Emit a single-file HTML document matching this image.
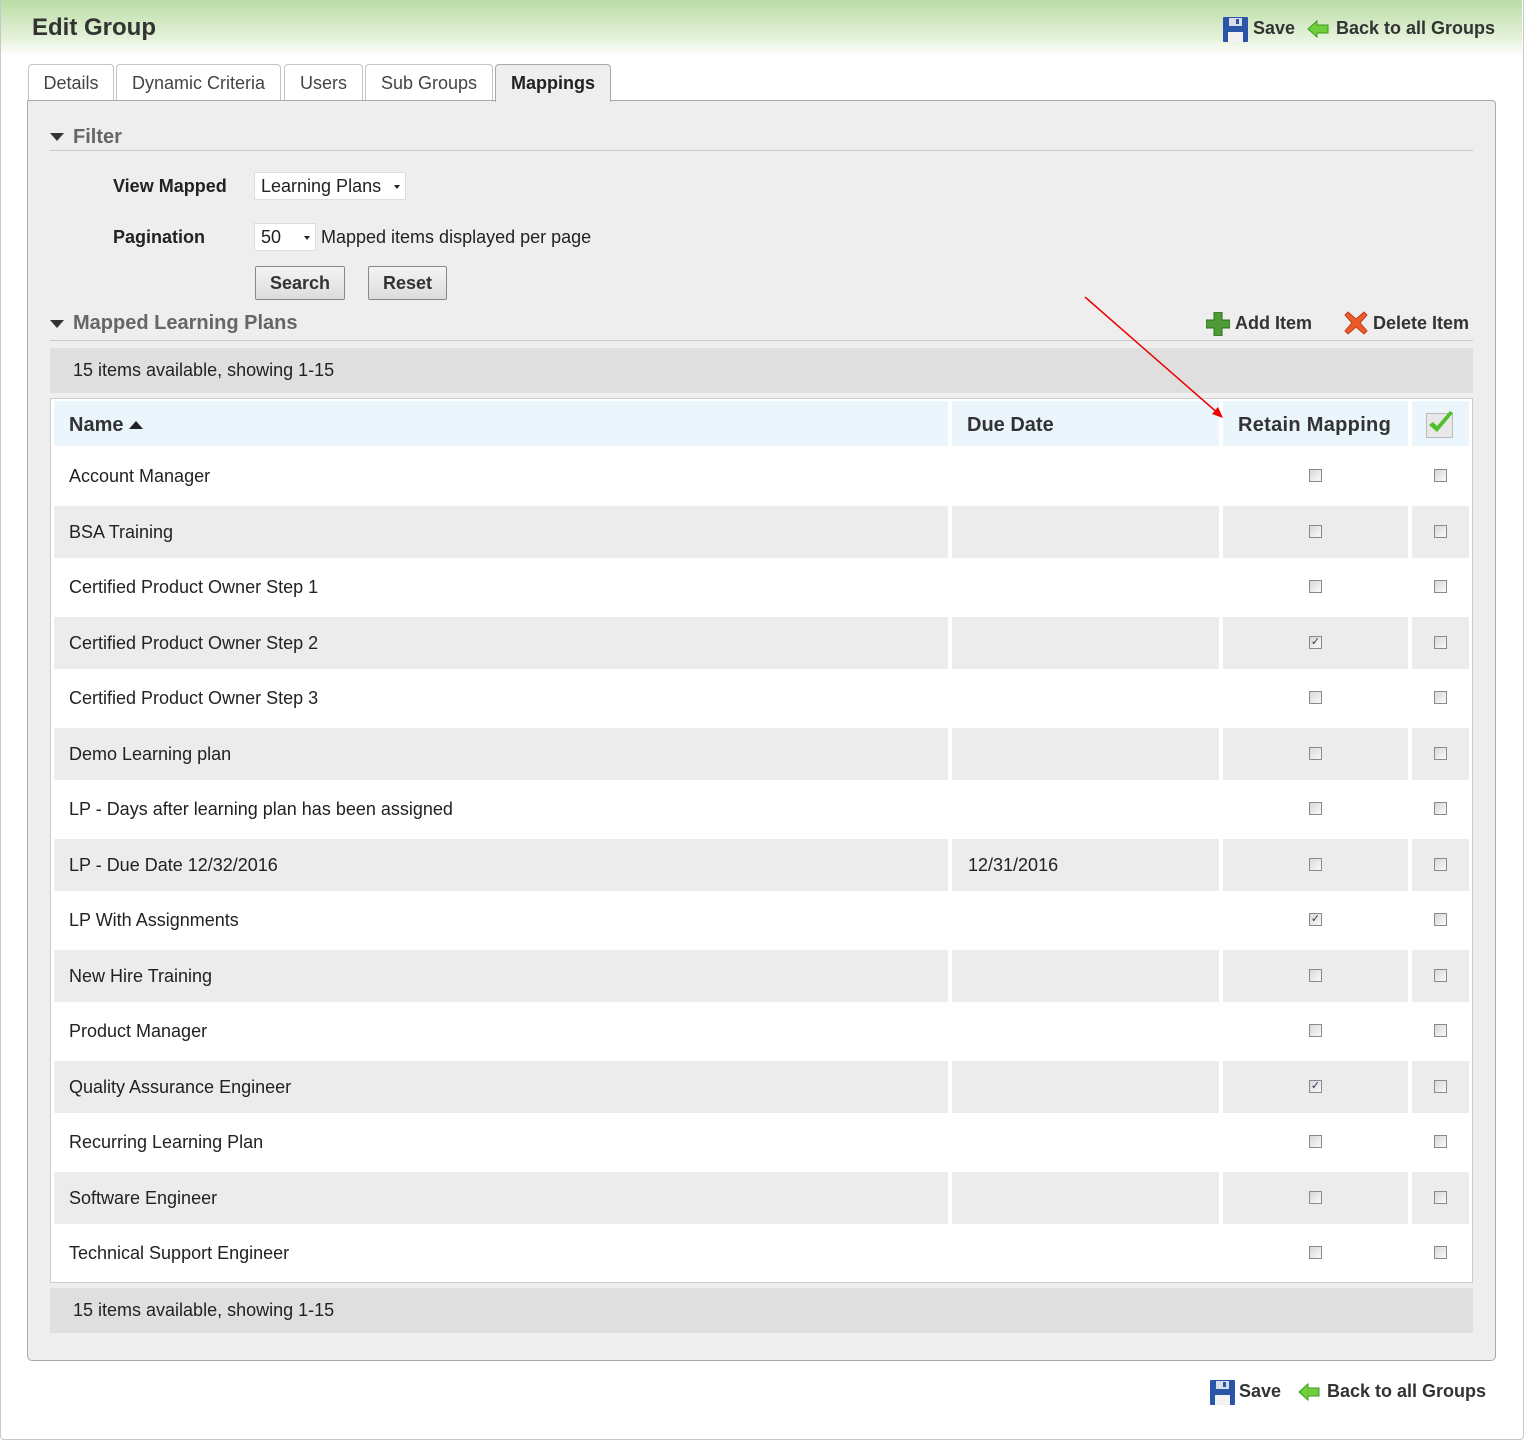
<!DOCTYPE html>
<html><head><meta charset="utf-8"><style>
*{box-sizing:border-box;margin:0;padding:0}
body{width:1524px;height:1440px;background:#fff;font-family:"Liberation Sans",Arial,sans-serif;color:#222;position:relative;overflow:hidden}
.abs{position:absolute}
.frame{position:absolute;left:0;top:0;width:1524px;height:1440px;border:1px solid #c8c8c8;border-top:none;border-radius:0 0 4px 4px}
.hdr{position:absolute;left:1px;top:0;width:1521px;height:56px;background:linear-gradient(#b9dca4,#e3f1d8 65%,#fff)}
h1{position:absolute;left:32px;top:14px;font-size:24px;font-weight:bold;color:#333}
.lnk{font-weight:bold;font-size:18px;color:#333}
.tab{position:absolute;top:64px;height:37px;border:1px solid #c4c4c4;border-bottom:none;border-radius:4px 4px 0 0;background:#fff;font-size:18px;color:#444;text-align:center;line-height:36px}
.panel{position:absolute;left:27px;top:100px;width:1469px;height:1261px;background:#eee;border:1px solid #aaa;border-radius:0 4px 5px 5px}
.sec{position:absolute;font-size:20px;font-weight:bold;color:#666}
.tri{position:absolute;width:0;height:0;border-left:7px solid transparent;border-right:7px solid transparent;border-top:8px solid #333}
.hr{position:absolute;height:1px;background:#ccc}
.lbl{position:absolute;font-size:18px;font-weight:bold;color:#222}
.sel{position:absolute;background:#fff;border:1px solid #ddd;font-size:18px;padding-left:6px;line-height:26px;height:28px}
.sel:after{content:"";position:absolute;right:5px;top:12px;border-left:3.5px solid transparent;border-right:3.5px solid transparent;border-top:4px solid #222}
.btn{position:absolute;top:266px;height:34px;border:1px solid #888;border-radius:2px;background:linear-gradient(#f4f4f4,#dcdcdc);font-size:18px;font-weight:bold;color:#333;text-align:center;line-height:32px}
.bar{position:absolute;left:50px;width:1423px;height:45px;background:#dfdfdf;font-size:18px;line-height:45px;padding-left:23px}
.tbl{position:absolute;left:50px;top:398px;width:1423px;height:885px;background:#fff;border:1px solid #ccc}
.th{position:absolute;top:401px;height:45px;background:#eaf5fc;font-size:20px;font-weight:bold;color:#333;line-height:48px}
.row{position:absolute;left:54px;width:1415px;height:55px}
.row .t{position:absolute;left:15px;top:19px;font-size:18px;color:#222}
.g{position:absolute;top:3px;height:52px;background:#ececec}
.cb{position:absolute;top:22px;width:13px;height:13px;border:1px solid #8a8a8a;background:linear-gradient(135deg,#d8d8d8,#fafafa);font-size:11px;line-height:10px;color:#335;text-align:center}
</style></head><body>
<div class="hdr"></div>
<div class="frame"></div>
<h1>Edit Group</h1>

<svg class="abs" style="left:1223px;top:17px" width="25" height="25" viewBox="0 0 25 25"><rect x="0" y="0" width="25" height="25" rx="1" fill="#2b55a8"/><rect x="6" y="1" width="13" height="8" fill="#d8dde8"/><rect x="13" y="2" width="3" height="5" fill="#2b55a8"/><rect x="5" y="15" width="15" height="10" fill="#f2f2f2"/></svg>
<span class="abs lnk" style="left:1253px;top:18px">Save</span>
<svg class="abs" style="left:1307px;top:19px" width="22" height="20" viewBox="0 0 22 20"><path d="M1 10 L10 2 L10 6 L21 6 L21 14 L10 14 L10 18 Z" fill="#6fcf3a" stroke="#3c9a1e" stroke-width="1"/></svg>
<span class="abs lnk" style="left:1336px;top:18px">Back to all Groups</span>

<div class="tab" style="left:28px;width:86px">Details</div>
<div class="tab" style="left:116px;width:165px">Dynamic Criteria</div>
<div class="tab" style="left:284px;width:79px">Users</div>
<div class="tab" style="left:365px;width:128px">Sub Groups</div>
<div class="panel"></div>
<div class="tab" style="left:495px;width:116px;height:38px;background:#eee;color:#222;font-weight:bold;border-color:#aaa">Mappings</div>

<div class="tri" style="left:50px;top:133px"></div>
<div class="sec" style="left:73px;top:126px">Filter</div>
<div class="hr" style="left:50px;top:150px;width:1423px"></div>
<div class="lbl" style="left:113px;top:176px">View Mapped</div>
<div class="sel" style="left:254px;top:172px;width:152px">Learning Plans</div>
<div class="lbl" style="left:113px;top:227px">Pagination</div>
<div class="sel" style="left:254px;top:223px;width:62px">50</div>
<span class="abs" style="left:321px;top:227px;font-size:18px">Mapped items displayed per page</span>
<div class="btn" style="left:255px;width:90px">Search</div>
<div class="btn" style="left:368px;width:79px">Reset</div>

<div class="tri" style="left:50px;top:320px"></div>
<div class="sec" style="left:73px;top:312px">Mapped Learning Plans</div>
<div class="hr" style="left:50px;top:340px;width:1423px"></div>
<svg class="abs" style="left:1206px;top:312px" width="24" height="24" viewBox="0 0 24 24"><path d="M8 0h8v8h8v8h-8v8h-8v-8h-8v-8h8z" fill="#4f9a35" stroke="#2f6d1e"/></svg>
<span class="abs lnk" style="left:1235px;top:313px">Add Item</span>
<svg class="abs" style="left:1344px;top:311px" width="24" height="24" viewBox="0 0 24 24"><path d="M4 1L12 8L20 1L23 4L16 12L23 20L20 23L12 16L4 23L1 20L8 12L1 4Z" fill="#ee5a2a" stroke="#c43a1a"/></svg>
<span class="abs lnk" style="left:1373px;top:313px">Delete Item</span>

<div class="bar" style="top:348px">15 items available, showing 1-15</div>
<div class="tbl"></div>
<div class="th" style="left:54px;width:894px;padding-left:15px">Name <span style="display:inline-block;width:0;height:0;border-left:7px solid transparent;border-right:7px solid transparent;border-bottom:8px solid #222;vertical-align:2px"></span></div>
<div class="th" style="left:952px;width:267px;padding-left:15px">Due Date</div>
<div class="th" style="left:1223px;width:185px;padding-left:15px;letter-spacing:0.3px">Retain Mapping</div>
<div class="th" style="left:1412px;width:57px"></div>
<svg class="abs" style="left:1426px;top:411px" width="28" height="27" viewBox="0 0 28 27"><rect x="0.5" y="2.5" width="26" height="24" fill="#e8e8e8" stroke="#bbb"/><path d="M3 14L11 21L27 2L24 0L11 15L7 11Z" fill="#4fbf2a"/></svg>
<svg class="abs" style="left:1080px;top:290px" width="150" height="130"><line x1="5" y1="7" x2="140" y2="125" stroke="#e00" stroke-width="1.5"/><path d="M143 128L132 124L138 117Z" fill="#e00"/></svg>

<div class="row" style="top:447px"><div class="t">Account Manager</div><div class="cb" style="left:1255px"></div><div class="cb" style="left:1380px"></div></div>
<div class="row" style="top:502.5px"><div class="g" style="left:0;width:894px"></div><div class="g" style="left:898px;width:267px"></div><div class="g" style="left:1169px;width:185px"></div><div class="g" style="left:1358px;width:57px"></div><div class="t">BSA Training</div><div class="cb" style="left:1255px"></div><div class="cb" style="left:1380px"></div></div>
<div class="row" style="top:558px"><div class="t">Certified Product Owner Step 1</div><div class="cb" style="left:1255px"></div><div class="cb" style="left:1380px"></div></div>
<div class="row" style="top:613.5px"><div class="g" style="left:0;width:894px"></div><div class="g" style="left:898px;width:267px"></div><div class="g" style="left:1169px;width:185px"></div><div class="g" style="left:1358px;width:57px"></div><div class="t">Certified Product Owner Step 2</div><div class="cb" style="left:1255px">✓</div><div class="cb" style="left:1380px"></div></div>
<div class="row" style="top:669px"><div class="t">Certified Product Owner Step 3</div><div class="cb" style="left:1255px"></div><div class="cb" style="left:1380px"></div></div>
<div class="row" style="top:724.5px"><div class="g" style="left:0;width:894px"></div><div class="g" style="left:898px;width:267px"></div><div class="g" style="left:1169px;width:185px"></div><div class="g" style="left:1358px;width:57px"></div><div class="t">Demo Learning plan</div><div class="cb" style="left:1255px"></div><div class="cb" style="left:1380px"></div></div>
<div class="row" style="top:780px"><div class="t">LP - Days after learning plan has been assigned</div><div class="cb" style="left:1255px"></div><div class="cb" style="left:1380px"></div></div>
<div class="row" style="top:835.5px"><div class="g" style="left:0;width:894px"></div><div class="g" style="left:898px;width:267px"></div><div class="g" style="left:1169px;width:185px"></div><div class="g" style="left:1358px;width:57px"></div><div class="t">LP - Due Date 12/32/2016</div><div class="t" style="left:914px">12/31/2016</div><div class="cb" style="left:1255px"></div><div class="cb" style="left:1380px"></div></div>
<div class="row" style="top:891px"><div class="t">LP With Assignments</div><div class="cb" style="left:1255px">✓</div><div class="cb" style="left:1380px"></div></div>
<div class="row" style="top:946.5px"><div class="g" style="left:0;width:894px"></div><div class="g" style="left:898px;width:267px"></div><div class="g" style="left:1169px;width:185px"></div><div class="g" style="left:1358px;width:57px"></div><div class="t">New Hire Training</div><div class="cb" style="left:1255px"></div><div class="cb" style="left:1380px"></div></div>
<div class="row" style="top:1002px"><div class="t">Product Manager</div><div class="cb" style="left:1255px"></div><div class="cb" style="left:1380px"></div></div>
<div class="row" style="top:1057.5px"><div class="g" style="left:0;width:894px"></div><div class="g" style="left:898px;width:267px"></div><div class="g" style="left:1169px;width:185px"></div><div class="g" style="left:1358px;width:57px"></div><div class="t">Quality Assurance Engineer</div><div class="cb" style="left:1255px">✓</div><div class="cb" style="left:1380px"></div></div>
<div class="row" style="top:1113px"><div class="t">Recurring Learning Plan</div><div class="cb" style="left:1255px"></div><div class="cb" style="left:1380px"></div></div>
<div class="row" style="top:1168.5px"><div class="g" style="left:0;width:894px"></div><div class="g" style="left:898px;width:267px"></div><div class="g" style="left:1169px;width:185px"></div><div class="g" style="left:1358px;width:57px"></div><div class="t">Software Engineer</div><div class="cb" style="left:1255px"></div><div class="cb" style="left:1380px"></div></div>
<div class="row" style="top:1224px"><div class="t">Technical Support Engineer</div><div class="cb" style="left:1255px"></div><div class="cb" style="left:1380px"></div></div>

<div class="bar" style="top:1288px">15 items available, showing 1-15</div>

<svg class="abs" style="left:1210px;top:1380px" width="25" height="25" viewBox="0 0 25 25"><rect x="0" y="0" width="25" height="25" rx="1" fill="#2b55a8"/><rect x="6" y="1" width="13" height="8" fill="#d8dde8"/><rect x="13" y="2" width="3" height="5" fill="#2b55a8"/><rect x="5" y="15" width="15" height="10" fill="#f2f2f2"/></svg>
<span class="abs lnk" style="left:1239px;top:1381px">Save</span>
<svg class="abs" style="left:1298px;top:1382px" width="22" height="20" viewBox="0 0 22 20"><path d="M1 10 L10 2 L10 6 L21 6 L21 14 L10 14 L10 18 Z" fill="#6fcf3a" stroke="#3c9a1e" stroke-width="1"/></svg>
<span class="abs lnk" style="left:1327px;top:1381px">Back to all Groups</span>
</body></html>
